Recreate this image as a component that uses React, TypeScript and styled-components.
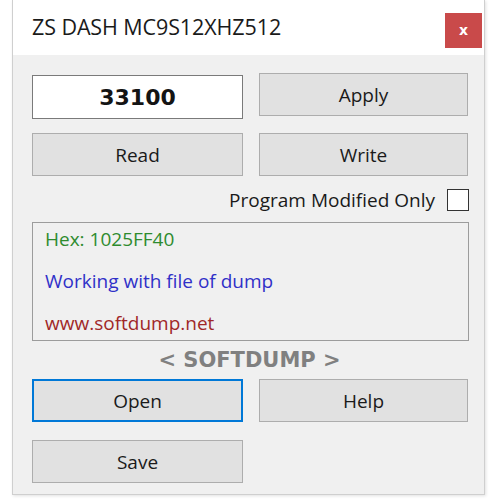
import React from "react";
import styled, { createGlobalStyle } from "styled-components";

const Global = createGlobalStyle`
  html, body { margin: 0; padding: 0; background: #ffffff; }
  body { width: 500px; height: 500px; overflow: hidden; font-family: "Open Sans", "Noto Sans", sans-serif; }
`;

const Window = styled.div`
  margin-left: 12px;
  width: 473px;
  height: 495px;
  box-sizing: border-box;
  border-left: 1px solid #cfcfcf;
  border-right: 1px solid #cfcfcf;
  border-bottom: 1px solid #cfcfcf;
  background: #f0f0f0;
  display: flex;
  flex-direction: column;
  box-shadow: 1px 1px 3px rgba(0, 0, 0, 0.12);
`;

const TitleBar = styled.div`
  height: 55px;
  flex-shrink: 0;
  background: #ffffff;
  display: flex;
  align-items: flex-start;
  justify-content: space-between;
  padding: 0 2px 0 19px;
`;

const Title = styled.div`
  font-family: "Open Sans", "Noto Sans", sans-serif;
  font-size: 21.5px;
  color: #1a1a1a;
  margin-top: 12px;
  letter-spacing: -0.1px;
`;

const CloseButton = styled.div`
  width: 37px;
  height: 35px;
  margin-top: 13px;
  background: #c94a4a;
  color: #ffffff;
  display: flex;
  align-items: center;
  justify-content: center;
  font-family: "DejaVu Sans", sans-serif;
  font-weight: bold;
  font-size: 14px;
  padding-bottom: 2px;
  box-sizing: border-box;
`;

const Body = styled.div`
  flex: 1;
  padding: 18px 15px 0 19px;
  display: flex;
  flex-direction: column;
`;

const Row = styled.div<{ $mt?: number }>`
  display: grid;
  grid-template-columns: 211px 209px;
  column-gap: 16px;
  align-items: start;
  flex-shrink: 0;
  margin-top: ${(p) => p.$mt ?? 0}px;
`;

const ValueInput = styled.div`
  margin-top: 2px;
  height: 44px;
  box-sizing: border-box;
  background: #ffffff;
  border: 1px solid #7a7a7a;
  display: flex;
  align-items: center;
  justify-content: center;
  font-family: "DejaVu Sans", sans-serif;
  font-weight: bold;
  font-size: 22px;
  color: #141414;
`;

const Button = styled.div<{ $focused?: boolean }>`
  height: 43px;
  box-sizing: border-box;
  background: #e1e1e1;
  border: ${(p) => (p.$focused ? "2px solid #0078d7" : "1px solid #adadad")};
  display: flex;
  align-items: center;
  justify-content: center;
  font-family: "Open Sans", "Noto Sans", sans-serif;
  font-size: 19px;
  color: #1a1a1a;
`;

const CheckRow = styled.div`
  margin-top: 13px;
  height: 22px;
  flex-shrink: 0;
  display: flex;
  align-items: center;
  justify-content: flex-end;
  gap: 12px;
`;

const CheckLabel = styled.span`
  font-family: "Open Sans", "Noto Sans", sans-serif;
  font-size: 19px;
  color: #1a1a1a;
`;

const CheckBox = styled.div`
  width: 22px;
  height: 22px;
  box-sizing: border-box;
  background: #ffffff;
  border: 1px solid #333333;
`;

const LogBox = styled.div`
  margin-top: 11px;
  height: 119px;
  flex-shrink: 0;
  box-sizing: border-box;
  border: 1px solid #9c9c9c;
  padding: 4px 12px 0 12px;
  display: flex;
  flex-direction: column;
  gap: 18px;
  overflow: hidden;
`;

const LogLine = styled.div<{ $color: string }>`
  height: 24px;
  line-height: 24px;
  white-space: nowrap;
  font-family: "Open Sans", "Noto Sans", sans-serif;
  font-size: 19px;
  color: ${(p) => p.$color};
`;

const Brand = styled.div`
  height: 38px;
  flex-shrink: 0;
  display: flex;
  align-items: center;
  justify-content: center;
  font-family: "DejaVu Sans", sans-serif;
  font-weight: bold;
  font-size: 21px;
  color: #808080;
  padding-right: 2px;
`;

export default function App() {
  return (
    <>
      <Global />
      <Window>
        <TitleBar>
          <Title>ZS DASH MC9S12XHZ512</Title>
          <CloseButton>x</CloseButton>
        </TitleBar>
        <Body>
          <Row>
            <ValueInput>33100</ValueInput>
            <Button>Apply</Button>
          </Row>
          <Row $mt={14}>
            <Button>Read</Button>
            <Button>Write</Button>
          </Row>
          <CheckRow>
            <CheckLabel>Program Modified Only</CheckLabel>
            <CheckBox />
          </CheckRow>
          <LogBox>
            <LogLine $color="#2e8b2e">Hex: 1025FF40</LogLine>
            <LogLine $color="#3030c8">Working with file of dump</LogLine>
            <LogLine $color="#a02828">www.softdump.net</LogLine>
          </LogBox>
          <Brand>&lt; SOFTDUMP &gt;</Brand>
          <Row>
            <Button $focused>Open</Button>
            <Button>Help</Button>
          </Row>
          <Row $mt={18}>
            <Button>Save</Button>
          </Row>
        </Body>
      </Window>
    </>
  );
}
